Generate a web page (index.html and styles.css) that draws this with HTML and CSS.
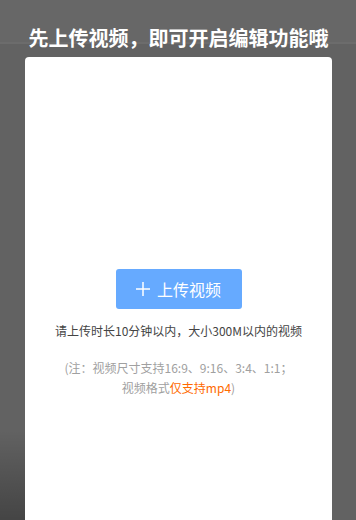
FILE: index.html
```html
<!DOCTYPE html>
<html lang="zh">
<head>
<meta charset="utf-8">
<link rel="stylesheet" href="styles.css">
</head>
<body>
<div class="page">
  <h1 class="title">先上传视频，即可开启编辑功能哦</h1>
  <div class="card">
    <button class="upload">
      <svg class="plus" width="14" height="14" viewBox="0 0 14 14"><path d="M7 0V14M0 7H14" stroke="#fff" stroke-width="1.5" fill="none"/></svg>
      <span>上传视频</span>
    </button>
    <p class="tip">请上传时长10分钟以内，大小300M以内的视频</p>
    <p class="note">(注：视频尺寸支持16:9、9:16、3:4、1:1；<br>视频格式<span class="hl">仅支持mp4</span>)</p>
  </div>
</div>
</body>
</html>
```
FILE: styles.css
```css
html, body {
  margin: 0;
  padding: 0;
  height: 100%;
  overflow: hidden;
}
body {
  font-family: "Noto Sans CJK SC", "Noto Sans", sans-serif;
  background:
    linear-gradient(to bottom, rgba(0,0,0,0) 0, rgba(0,0,0,0) 430px, rgba(0,0,0,0.3) 520px) left top / 25px 100% no-repeat,
    linear-gradient(to bottom, #676767 0, #676767 42px, #6c6c6c 42px, #6c6c6c 44px, #626262 44px) ;
  background-color: #626262;
}
.page {
  display: flex;
  flex-direction: column;
  align-items: stretch;
  height: 100%;
}
.title {
  margin: 26px 0 0;
  font-size: 20px;
  line-height: 24px;
  font-weight: 700;
  color: #fff;
  text-align: center;
  padding-left: 1px;
}
.card {
  margin: 7px 24px 0 25px;
  background: #fff;
  border-radius: 4px 4px 0 0;
  flex: 1;
  display: flex;
  flex-direction: column;
  align-items: center;
  padding-top: 212px;
}
.upload {
  width: 126px;
  height: 40px;
  border: none;
  border-radius: 3px;
  background: #66aaff;
  color: #fff;
  font-family: inherit;
  font-size: 16px;
  display: flex;
  align-items: center;
  justify-content: center;
  gap: 7px;
  padding: 0;
}
.plus { display: block; }
.tip {
  margin: 14px 0 0;
  font-size: 12px;
  line-height: 16px;
  color: #444;
}
.note {
  margin: 19px 0 0;
  font-size: 12px;
  line-height: 20px;
  color: #a0a0a0;
  text-align: center;
}
.hl { color: #ff6a00; }
```
